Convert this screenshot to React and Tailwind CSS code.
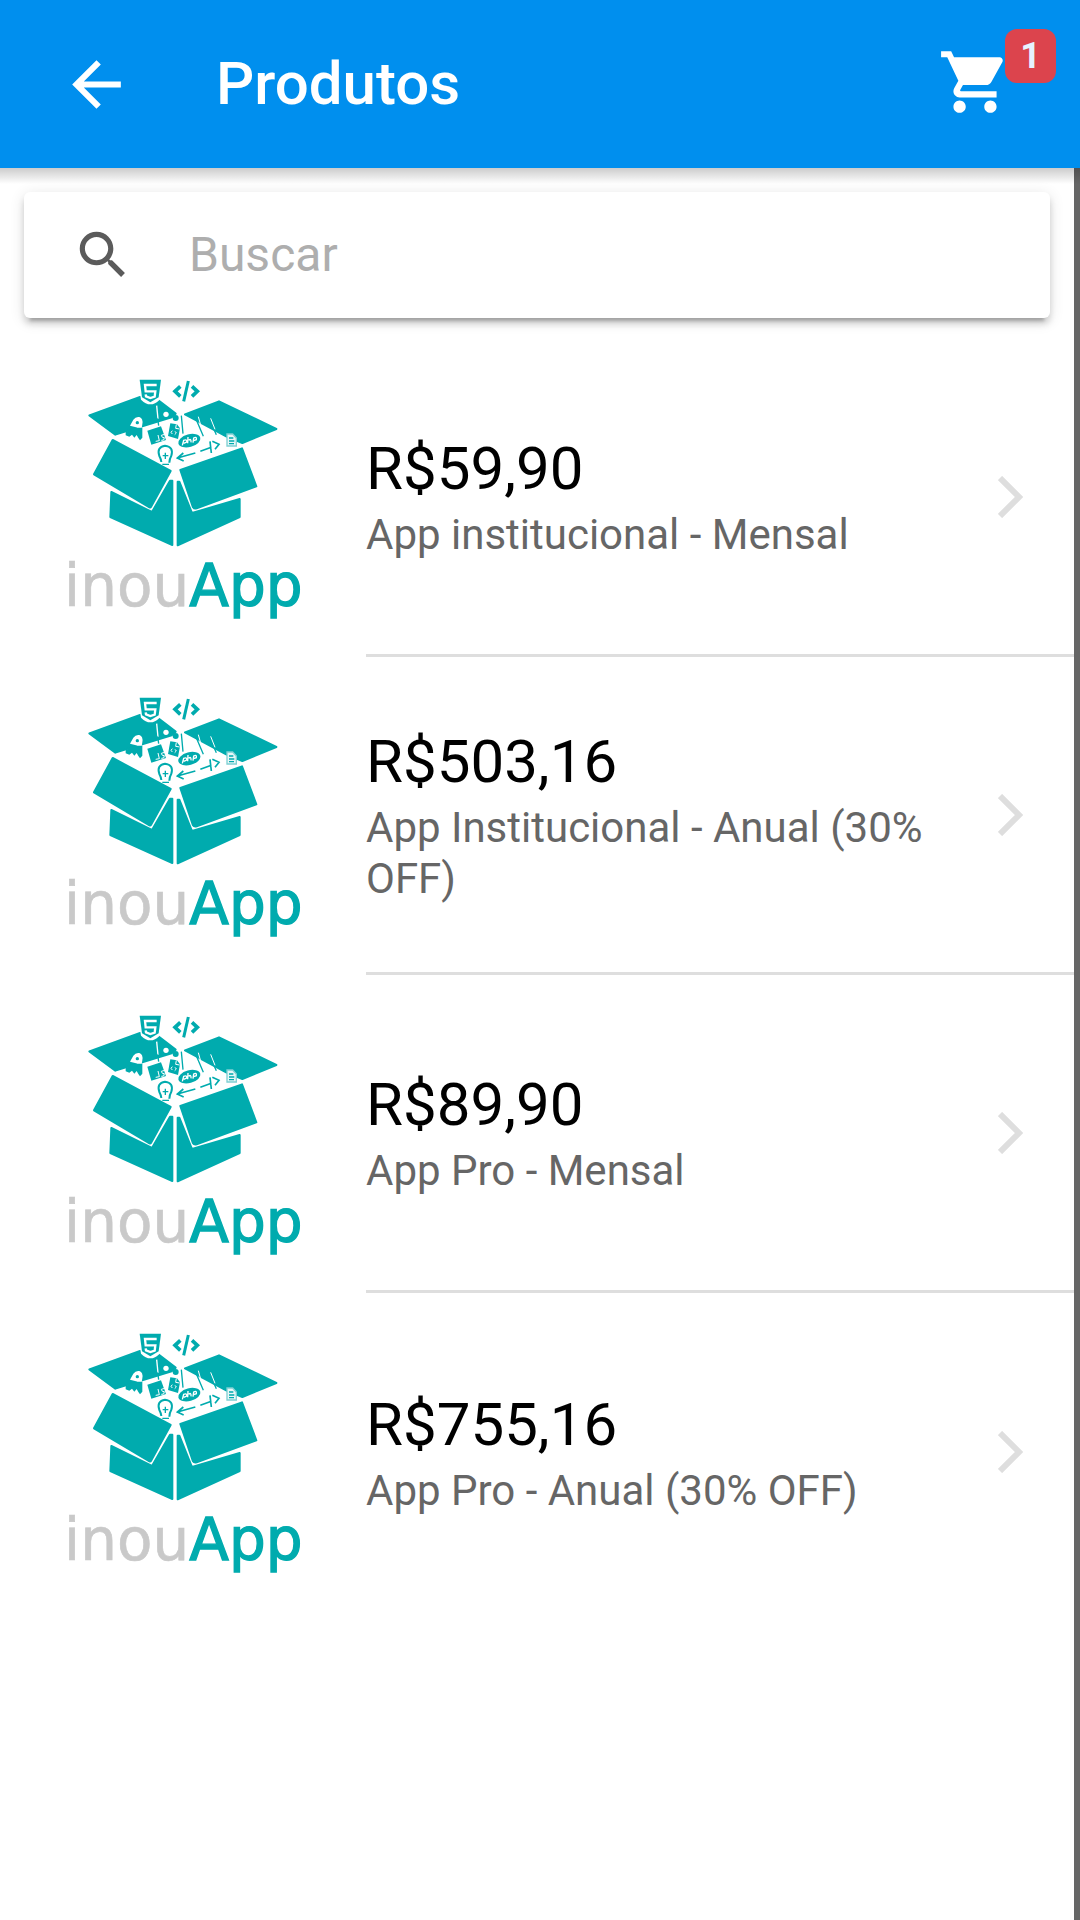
import React from "react";

const products = [
  { price: "R$59,90", name: "App institucional - Mensal" },
  { price: "R$503,16", name: "App Institucional - Anual (30% OFF)" },
  { price: "R$89,90", name: "App Pro - Mensal" },
  { price: "R$755,16", name: "App Pro - Anual (30% OFF)" },
];

function Logo() {
  return (
    <svg viewBox="24 -6 810 810" className="h-[270px] w-[270px] shrink-0" role="img" aria-label="inouApp">
      <g fill="#00abae" stroke="#00abae" strokeWidth="6" strokeLinejoin="round">
        {/* back flaps */}
        <path d="M148 151 L300 96 L356 107 L407 146 L395 157 L226 209 Z" />
        <path d="M435 148 L537 109 L709 192 L607 234 L560 215 Z" />
        {/* front flaps */}
        <path d="M218 225 L392 318 L334 424 Q331 430 326 426 L162 328 Z" />
        <path d="M421 315 L606 250 L649 364 L470 430 Q462 432 459 427 Z" />
        {/* body */}
        <path d="M214 381 L336 441 L390 347 L397 347 L397 540 L211 456 Z" />
        <path d="M413 350 L418 350 L456 444 L599 402 L599 456 L413 541 Z" />
      </g>
      {/* shield */}
      <path d="M293 40 H368 L359 104 Q331 132 303 104 Z" fill="#fff" />
      <path d="M299 44 H363 L356 97 L331 112 L306 97 Z" fill="#00abae" />
      <path d="M350 60 H315 L317 79 H346 L344 95 L331 99 L318 94 L317 88" fill="none" stroke="#fff" strokeWidth="7" />
      {/* code tag */}
      <path d="M421 64 L405 79 L421 94 M456 64 L472 79 L456 94" fill="none" stroke="#00abae" strokeWidth="11" />
      <path d="M445 48 L431 109" stroke="#00abae" strokeWidth="9" />
      {/* cloud */}
      <path d="M270 182 L280 164 Q287 154 298 156 Q310 160 307 178 L304 196 L288 187 Z" fill="#fff" />
      <circle cx="292" cy="173" r="5" fill="#00abae" />
      <path d="M257 202 L272 193 L288 188 L307 188 L307 218 L300 226 L295 219 L290 210 L283 218 L276 209 L268 215 L257 211 Z" fill="#00abae" />
      {/* antennas */}
      <circle cx="378" cy="148" r="8" fill="#fff" />
      <circle cx="407" cy="159" r="9" fill="#00abae" />
      <path d="M350 122 L354 162" stroke="#fff" strokeWidth="4" />
      <path d="M353 160 L356 182 M424 152 L429 206 M468 162 L490 214 M507 160 L529 209" stroke="#00abae" strokeWidth="4" />
      <path d="M475 155 L483 184 M512 160 L525 193" stroke="#fff" strokeWidth="3" />
      {/* script file */}
      <path d="M322 197 L363 184 L378 225 L334 239 Z" fill="#00abae" />
      <path d="M354 210 L358 227 L347 229 M374 208 L364 211 L367 217 L373 218 L371 225 L364 226" fill="none" stroke="#fff" strokeWidth="3" />
      {/* document */}
      <path d="M391 175 L411 178 L420 190 L414 222 L384 213 Z" fill="#00abae" />
      <path d="M409 178 L407 190 L419 192 M397 197 L393 202 L397 207 M405 199 L409 204 L404 209" fill="none" stroke="#fff" strokeWidth="3" />
      {/* oval badge */}
      <ellipse cx="448" cy="227" rx="34" ry="19" transform="rotate(-15 448 227)" fill="#00abae" />
      <path d="M427 241 L431 226 Q442 222 440 231 L431 235 M444 216 L443 235 M446 226 Q454 219 453 232 M459 233 L461 219 Q471 214 469 224 L461 227" fill="none" stroke="#fff" strokeWidth="4" />
      {/* small code tag and arrow */}
      <path d="M412 279 L466 264 M430 264 L412 279 L431 288 M481 259 L514 247 M510 229 L514 264 M517 229 L537 238 L525 253" fill="none" stroke="#00abae" strokeWidth="5" />
      {/* database page */}
      <path d="M561 207 H578 L589 219 V243 H561 Z" fill="#e8f7f7" stroke="#7fd0d3" strokeWidth="4" />
      <path d="M567 219 H580 M567 228 H583 M567 236 H582" stroke="#00abae" strokeWidth="4" />
      {/* bulb */}
      <path d="M364 291 Q363 282 358 273 Q349 246 375 242 Q402 245 394 272 Q388 282 388 293" fill="none" stroke="#00abae" strokeWidth="6" />
      <path d="M376 263 V282 M368 272 H385 M367 298 H387" stroke="#00abae" strokeWidth="4" />
      <text x="430" y="724" textAnchor="middle" fontFamily="'DejaVu Sans', sans-serif" fontSize="174">
        <tspan fill="#c9c9c9" stroke="#c9c9c9" strokeWidth="2">inou</tspan>
        <tspan fill="#00abae" stroke="#00abae" strokeWidth="4">App</tspan>
      </text>
    </svg>
  );
}

export default function App() {
  return (
    <div className="flex min-h-screen flex-col bg-white font-[Roboto,sans-serif]">
      <header className="relative flex h-[168px] items-center bg-[#008fee] pl-[60px] text-white">
        <button type="button" aria-label="Voltar">
          <svg viewBox="0 0 24 24" className="h-[73px] w-[73px]" fill="currentColor" aria-hidden="true">
            <path d="M20 11H7.83l5.59-5.59L12 4l-8 8 8 8 1.41-1.41L7.83 13H20v-2z" />
          </svg>
        </button>
        <h1 className="ml-[83px] flex-1 text-[60px] leading-[72px] font-medium">Produtos</h1>
        <button type="button" aria-label="Carrinho, 1 item" className="relative mr-[68px] mb-1">
          <svg viewBox="0 0 24 24" className="h-[74px] w-[74px]" fill="currentColor" aria-hidden="true">
            <path d="M7 18c-1.1 0-1.99.9-1.99 2S5.9 22 7 22s2-.9 2-2-.9-2-2-2zM1 2v2h2l3.6 7.59-1.35 2.45c-.16.28-.25.61-.25.96 0 1.1.9 2 2 2h12v-2H7.42c-.14 0-.25-.11-.25-.25l.03-.12.9-1.63h7.45c.75 0 1.41-.41 1.75-1.03l3.58-6.49c.08-.14.12-.31.12-.48 0-.55-.45-1-1-1H5.21l-.94-2H1zm16 16c-1.1 0-1.99.9-1.99 2s.89 2 1.99 2 2-.9 2-2-.9-2-2-2z" />
          </svg>
          <span className="absolute -top-4 -right-11 flex h-[54px] w-[51px] items-center justify-center rounded-xl bg-[#dc444d] text-[36px] leading-[54px] font-bold text-[#e6f3ff]">1</span>
        </button>
        <div className="absolute inset-x-0 top-full h-4 bg-linear-to-b from-black/20 to-transparent" />
      </header>

      <main className="flex-1 border-r-[6px] border-[#666]">
        <div className="px-6 pt-6 pb-[21px]">
          <label className="flex h-[126px] items-center rounded-md bg-white pl-12 shadow-[0_6px_6px_0_rgba(0,0,0,0.14),0_9px_3px_-6px_rgba(0,0,0,0.2),0_3px_15px_0_rgba(0,0,0,0.12)]">
            <svg viewBox="0 0 24 24" className="h-[62px] w-[62px] shrink-0" fill="#5b5b5b" aria-hidden="true">
              <path d="M15.5 14h-.79l-.28-.27C15.41 12.59 16 11.11 16 9.5 16 5.91 13.09 3 9.5 3S3 5.91 3 9.5 5.91 16 9.5 16c1.61 0 3.09-.59 4.23-1.57l.27.28v.79l5 4.99L20.49 19l-4.99-5zm-6 0C7.01 14 5 11.99 5 9.5S7.01 5 9.5 5 14 7.01 14 9.5 11.99 14 9.5 14z" />
            </svg>
            <input
              type="search"
              aria-label="Buscar"
              placeholder="Buscar"
              className="ml-[55px] h-[72px] min-w-0 flex-1 bg-transparent text-[48px] text-[#141414] outline-none placeholder:text-[#aeaeae]"
            />
          </label>
        </div>

        <ul>
          {products.map((p) => (
            <li key={p.name} className="group">
              <a href="#produto" className="flex h-[318px] items-center gap-12 pl-12">
                <Logo />
                <div className="flex h-full flex-1 items-center border-b-[3px] border-[#dedede] pr-[51px] group-last:border-b-0">
                  <div className="flex-1">
                    <h2 className="text-[60px] leading-[72px] text-black">{p.price}</h2>
                    <p className="mt-1 text-[42px] leading-[51px] text-[#666]">{p.name}</p>
                  </div>
                  <svg viewBox="0 0 25 42" className="ml-6 h-[42px] w-[25px] shrink-0" fill="none" stroke="#dedede" strokeWidth="6" aria-hidden="true">
                    <path d="M2 2 L21 21 L2 40" />
                  </svg>
                </div>
              </a>
            </li>
          ))}
        </ul>
      </main>
    </div>
  );
}
